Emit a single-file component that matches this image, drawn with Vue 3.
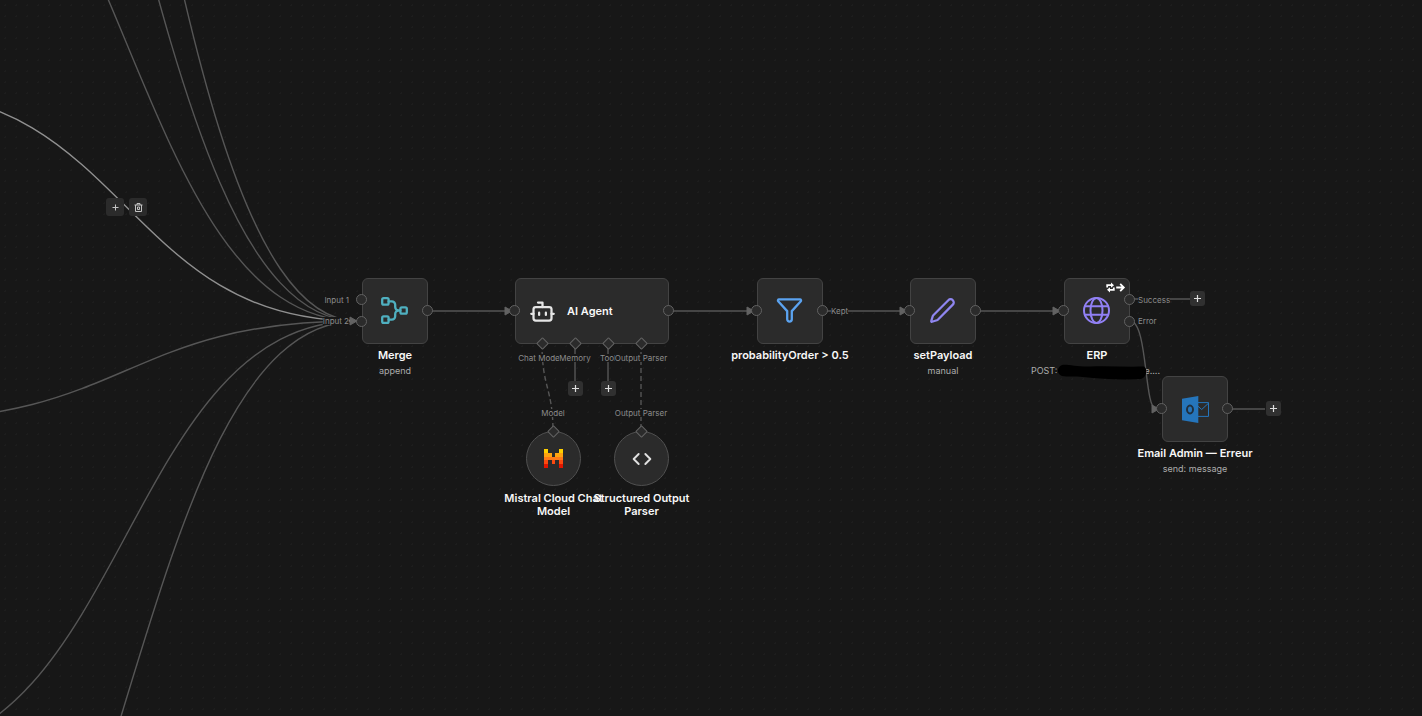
<script setup>
const endX = 357
const endY = 321
const startX = -105

const incoming = [-895, -566, -237, 420, 750, 1079]
const curve = (y) => {
  const mid = (startX + endX) / 2
  return `M${startX} ${y} C${mid} ${y} ${mid} ${endY} ${endX} ${endY}`
}

const lines = [
  'M428 311H509',
  'M669 311H751',
  'M823 311H904',
  'M976 311H1058',
  'M1130 299H1190',
  'M1228 409H1265',
  'M1130 321C1148 321 1144 409 1156 409',
  'M575 344V381',
  'M608 344V381',
]
const dashed = ['M542 344C542 388 553 388 553 432', 'M641 344V432']
const arrows = [
  { x: 357, y: 321 },
  { x: 512, y: 311 },
  { x: 754, y: 311 },
  { x: 907, y: 311 },
  { x: 1060, y: 311 },
  { x: 1159, y: 409 },
]

const nodes = [
  { id: 'merge', x: 362, y: 278, w: 66, title: 'Merge', sub: 'append' },
  { id: 'agent', x: 515, y: 278, w: 154, inner: 'AI Agent' },
  { id: 'filter', x: 757, y: 278, w: 66, title: 'probabilityOrder > 0.5' },
  { id: 'edit', x: 910, y: 278, w: 66, title: 'setPayload', sub: 'manual' },
  { id: 'http', x: 1064, y: 278, w: 66, title: 'ERP', post: true },
  { id: 'mail', x: 1162, y: 376, w: 66, title: 'Email Admin — Erreur', sub: 'send: message' },
  { id: 'mistral', x: 526, y: 431, w: 55, round: true, title: 'Mistral Cloud Chat Model' },
  { id: 'parser', x: 614, y: 431, w: 55, round: true, title: 'Structured Output Parser' },
]

const ports = [
  [362, 300], [362, 322], [428, 311],
  [515, 311], [669, 311],
  [757, 311], [823, 311],
  [910, 311], [976, 311],
  [1064, 311], [1130, 300], [1130, 322],
  [1162, 409], [1228, 409],
]
const diamonds = [
  [542, 344], [575, 344], [608, 344], [641, 344], [553, 432], [641, 432],
]

const labels = [
  { t: 'Input 1', x: 349, y: 300, a: 'end' },
  { t: 'Input 2', x: 349, y: 321, a: 'end' },
  { t: 'Kept', x: 831, y: 311, a: 'start' },
  { t: 'Success', x: 1138, y: 300, a: 'start' },
  { t: 'Error', x: 1138, y: 321, a: 'start' },
  { t: 'Chat Model*', x: 542, y: 358, a: 'mid' },
  { t: 'Memory', x: 575, y: 358, a: 'mid' },
  { t: 'Tool', x: 608, y: 358, a: 'mid' },
  { t: 'Output Parser', x: 641, y: 358, a: 'mid' },
  { t: 'Model', x: 553, y: 413, a: 'mid' },
  { t: 'Output Parser', x: 641, y: 413, a: 'mid' },
]

const plusButtons = [
  { x: 575, y: 389, name: 'Add memory' },
  { x: 608, y: 389, name: 'Add tool' },
  { x: 1197, y: 299, name: 'Add node after success' },
  { x: 1273, y: 409, name: 'Add node after email' },
]

const mistral = [
  ['#ffd000', [0, 4]],
  ['#ffa310', [0, 1, 3, 4]],
  ['#ff7a18', [0, 1, 2, 3, 4]],
  ['#fa4a10', [0, 2, 4]],
  ['#e11500', [0, 4]],
]

const at = (x, y) => ({ left: `${x}px`, top: `${y}px` })
</script>

<template>
  <main class="canvas">
    <svg class="edges" aria-hidden="true">
      <path v-for="y in incoming" :key="y" :d="curve(y)" class="edge" />
      <path :d="curve(92)" class="edge hot" />
      <path v-for="d in lines" :key="d" :d="d" class="edge" />
      <path v-for="d in dashed" :key="d" :d="d" class="edge dash" />
      <path
        v-for="a in arrows"
        :key="a.x"
        :d="`M${a.x - 7} ${a.y - 4}l7 4l-7 4z`"
        class="arrow"
      />
    </svg>

    <span
      v-for="(l, i) in labels"
      :key="i"
      class="label"
      :class="l.a"
      :style="at(l.x, l.y)"
    >{{ l.t }}</span>

    <section
      v-for="n in nodes"
      :key="n.id"
      class="node"
      :style="{ ...at(n.x, n.y), width: `${n.w}px` }"
    >
      <div class="box" :class="{ round: n.round, wide: n.inner }">
        <svg v-if="n.id === 'merge'" class="icon teal" viewBox="0 0 27 27">
          <rect x="1.2" y="1.2" width="6.4" height="6.4" rx="1.4" />
          <rect x="1.2" y="19.4" width="6.4" height="6.4" rx="1.4" />
          <rect x="19.4" y="10.3" width="6.4" height="6.4" rx="1.4" />
          <path d="M7.6 4.4h3.2a3.4 3.4 0 0 1 3.4 3.4v2.3a3.4 3.4 0 0 0 3.4 3.4h1.8M7.6 22.6h3.2a3.4 3.4 0 0 0 3.4-3.4v-2.3a3.4 3.4 0 0 1 3.4-3.4" />
        </svg>
        <svg v-else-if="n.id === 'agent'" class="icon light" viewBox="0 0 24 24">
          <path d="M12 8V4H8M2 14h2M20 14h2M15 13v2M9 13v2" />
          <rect x="4" y="8" width="16" height="12" rx="2" />
        </svg>
        <svg v-else-if="n.id === 'filter'" class="icon blue" viewBox="0 0 27 27">
          <path d="M3 2.4h21c1 0 1.4 1.2.8 1.9l-9 9.8v8.2a2.3 2.3 0 0 1-4.6 0v-8.2l-9-9.8C1.6 3.6 2 2.4 3 2.4z" />
        </svg>
        <svg v-else-if="n.id === 'edit'" class="icon violet" viewBox="0 0 24 24">
          <path d="M21.174 6.812a1 1 0 0 0-3.986-3.987L3.842 16.174a2 2 0 0 0-.5.83l-1.321 4.352a.5.5 0 0 0 .623.622l4.353-1.32a2 2 0 0 0 .83-.497z" />
        </svg>
        <svg v-else-if="n.id === 'http'" class="icon purple" viewBox="0 0 27 27">
          <circle cx="13.5" cy="13.5" r="12.5" />
          <ellipse cx="13.5" cy="13.5" rx="6" ry="12.5" />
          <path d="M1.8 9.2h23.4M1.8 17.8h23.4" />
        </svg>
        <svg v-else-if="n.id === 'mail'" class="icon outlook" viewBox="0 0 27 27">
          <path class="fill" d="M0 2.7L16.3 0v27L0 24.3z" />
          <ellipse class="ring" cx="8" cy="13.5" rx="3" ry="3.9" />
          <path class="env" d="M16.3 6.6h10.2v13.8H16.3M16.3 10.5l3.4 3L26.5 7.2" />
        </svg>
        <svg v-else-if="n.id === 'mistral'" class="icon mistral" viewBox="0 0 20 20">
          <template v-for="(row, r) in mistral" :key="r">
            <rect
              v-for="c in row[1]"
              :key="c"
              :x="c * 4"
              :y="r * 4"
              width="4"
              height="4"
              :fill="row[0]"
            />
          </template>
        </svg>
        <svg v-else class="icon code" viewBox="0 0 24 24">
          <path d="m16 18 6-6-6-6M8 6l-6 6 6 6" />
        </svg>
        <b v-if="n.inner" class="inner">{{ n.inner }}</b>
        <svg v-if="n.post" class="flags" viewBox="0 0 19 9" aria-hidden="true">
          <path d="M1.2 4.6V2.2H6M7.8 4.4v2.4H3" />
          <path class="solid" d="M5 -.4L8 2.2L5 4.8zM4 4.2L1 6.8L4 9.4z" />
          <path d="M10.2 4.5h7.4M14.2 .9l3.6 3.6-3.6 3.6" />
        </svg>
      </div>
      <div v-if="n.title" class="caption">
        <b class="title">{{ n.title }}</b>
        <span v-if="n.sub" class="sub">{{ n.sub }}</span>
        <span v-if="n.post" class="sub post">
          <span>POST:</span>
          <svg class="redact" viewBox="0 0 90 16" aria-hidden="true">
            <path d="M5 1C10 0 20 3 34 2.5C52 2 70 3 87 2.5C91 5 90 13 84 15C66 16 44 15 26 13C18 12 10 13 5 12C-1 10 0 3 5 1z" />
          </svg>
          <span class="rest">e....</span>
        </span>
      </div>
    </section>

    <i v-for="(p, i) in ports" :key="'p' + i" class="port" :style="at(p[0], p[1])"></i>
    <i v-for="(p, i) in diamonds" :key="'d' + i" class="port diamond" :style="at(p[0], p[1])"></i>

    <button
      v-for="b in plusButtons"
      :key="b.name"
      class="plus"
      type="button"
      :aria-label="b.name"
      :style="at(b.x, b.y)"
    >
      <svg viewBox="0 0 9 9"><path d="M4.5 1v7M1 4.5h7" /></svg>
    </button>

    <div class="toolbar" :style="at(106, 198)">
      <button class="tool" type="button" aria-label="Add node">
        <svg viewBox="0 0 9 9"><path d="M4.5 1.5v6M1.5 4.5h6" /></svg>
      </button>
      <button class="tool" type="button" aria-label="Delete connection">
        <svg viewBox="0 0 9 9"><path d="M.5 2h8M3 2V.5h3V2M1.5 2v6.5h6V2M3.5 4h2v2.5h-2z" /></svg>
      </button>
    </div>
  </main>
</template>

<style>
body {
  margin: 0;
  background: #171717;
}
</style>

<style scoped>
.canvas {
  position: relative;
  min-height: 100vh;
  overflow: hidden;
  background-color: #171717;
  background-image: radial-gradient(circle, #1d1d1d 1px, transparent 1px);
  background-size: 11px 11px;
  font-family: Inter, "Liberation Sans", sans-serif;
}
.edges {
  position: absolute;
  inset: 0;
  width: 100%;
  height: 100%;
}
.edge {
  fill: none;
  stroke: #565656;
  stroke-width: 1.4;
}
.hot {
  stroke: #909090;
}
.dash {
  stroke-dasharray: 5 3;
}
.arrow {
  fill: #626262;
  stroke: #626262;
  stroke-width: 1;
  stroke-linejoin: round;
}
.label {
  position: absolute;
  font-size: 8px;
  line-height: 8px;
  color: #8c8c8c;
  background: #171717;
  white-space: nowrap;
}
.start {
  transform: translate(0, -50%);
}
.mid {
  transform: translate(-50%, -50%);
}
.end {
  transform: translate(-100%, -50%);
}
.node {
  position: absolute;
  display: flex;
  flex-direction: column;
  align-items: center;
}
.box {
  position: relative;
  box-sizing: border-box;
  width: 100%;
  height: 66px;
  border: 1px solid #434343;
  border-radius: 6px;
  background: #2b2b2b;
  display: flex;
  align-items: center;
  justify-content: center;
}
.box.wide {
  justify-content: flex-start;
  gap: 11px;
  padding-left: 13px;
}
.box.round {
  height: 55px;
  border-radius: 50%;
  border-color: #505050;
}
.icon {
  width: 27px;
  height: 27px;
  fill: none;
  stroke-width: 2.3;
  stroke-linecap: round;
  stroke-linejoin: round;
  overflow: visible;
}
.box:not(.wide):not(.round) > .icon:not(.outlook) {
  margin: 0 1px 1px 0;
}
.teal { stroke: #4fb0c0; }
.light { stroke: #e6e6e6; stroke-width: 2; }
.blue { stroke: #5ba3f0; }
.violet { stroke: #8f86f0; stroke-width: 2; }
.purple { stroke: #9180f4; stroke-width: 2; }
.outlook .fill { fill: #2575bb; }
.outlook .ring { stroke: #20303f; stroke-width: 2; }
.outlook .env { stroke: #2575bb; stroke-width: 1; stroke-linejoin: miter; }
.mistral {
  width: 19px;
  height: 19px;
  shape-rendering: crispEdges;
}
.code {
  width: 20px;
  height: 20px;
  stroke: #e0e0e0;
  stroke-width: 2.3;
}
.inner {
  font-size: 11px;
  line-height: 13px;
  font-weight: 600;
  color: #f8f8f8;
}
.flags {
  position: absolute;
  top: 4px;
  right: 4px;
  width: 19px;
  height: 9px;
  fill: none;
  stroke: #ffffff;
  stroke-width: 1.8;
  overflow: visible;
}
.flags .solid {
  fill: #ffffff;
  stroke: none;
}
.caption {
  display: flex;
  flex-direction: column;
  align-items: center;
  gap: 3px;
  width: 132px;
  margin-top: 5px;
  text-align: center;
}
.round + .caption {
  margin-top: 6px;
}
.title {
  max-width: 132px;
  font-size: 11px;
  line-height: 13px;
  font-weight: 600;
  color: #f8f8f8;
}
.round + .caption .title {
  max-width: 104px;
}
.sub {
  font-size: 9px;
  line-height: 12px;
  color: #acacac;
  white-space: nowrap;
}
.post {
  display: flex;
  align-items: center;
  padding-right: 3px;
}
.redact {
  position: relative;
  width: 90px;
  height: 16px;
  margin: -1px 0 -3px;
  fill: #000;
}
.rest {
  margin-left: -3px;
}
.port {
  position: absolute;
  box-sizing: border-box;
  width: 11px;
  height: 11px;
  margin: -6px 0 0 -6px;
  border: 1px solid #626262;
  border-radius: 50%;
  background: #2b2b2b;
}
.diamond {
  width: 9px;
  height: 9px;
  margin: -5px 0 0 -4px;
  border-radius: 1px;
  transform: rotate(45deg);
}
.plus,
.tool {
  display: flex;
  align-items: center;
  justify-content: center;
  padding: 0;
  border: 0;
  border-radius: 3px;
  background: #303030;
}
.plus {
  position: absolute;
  width: 15px;
  height: 15px;
  margin: -8px 0 0 -7px;
}
.plus svg {
  width: 9px;
  height: 9px;
}
.plus path,
.tool path {
  fill: none;
  stroke: #dedede;
  stroke-width: 1.2;
}
.toolbar {
  position: absolute;
  display: flex;
  gap: 5px;
}
.tool {
  width: 18px;
  height: 18px;
  background: #2b2b2b;
}
.tool svg {
  width: 9px;
  height: 9px;
}
.tool path {
  stroke: #c4c4c4;
  stroke-width: 1;
}
</style>
